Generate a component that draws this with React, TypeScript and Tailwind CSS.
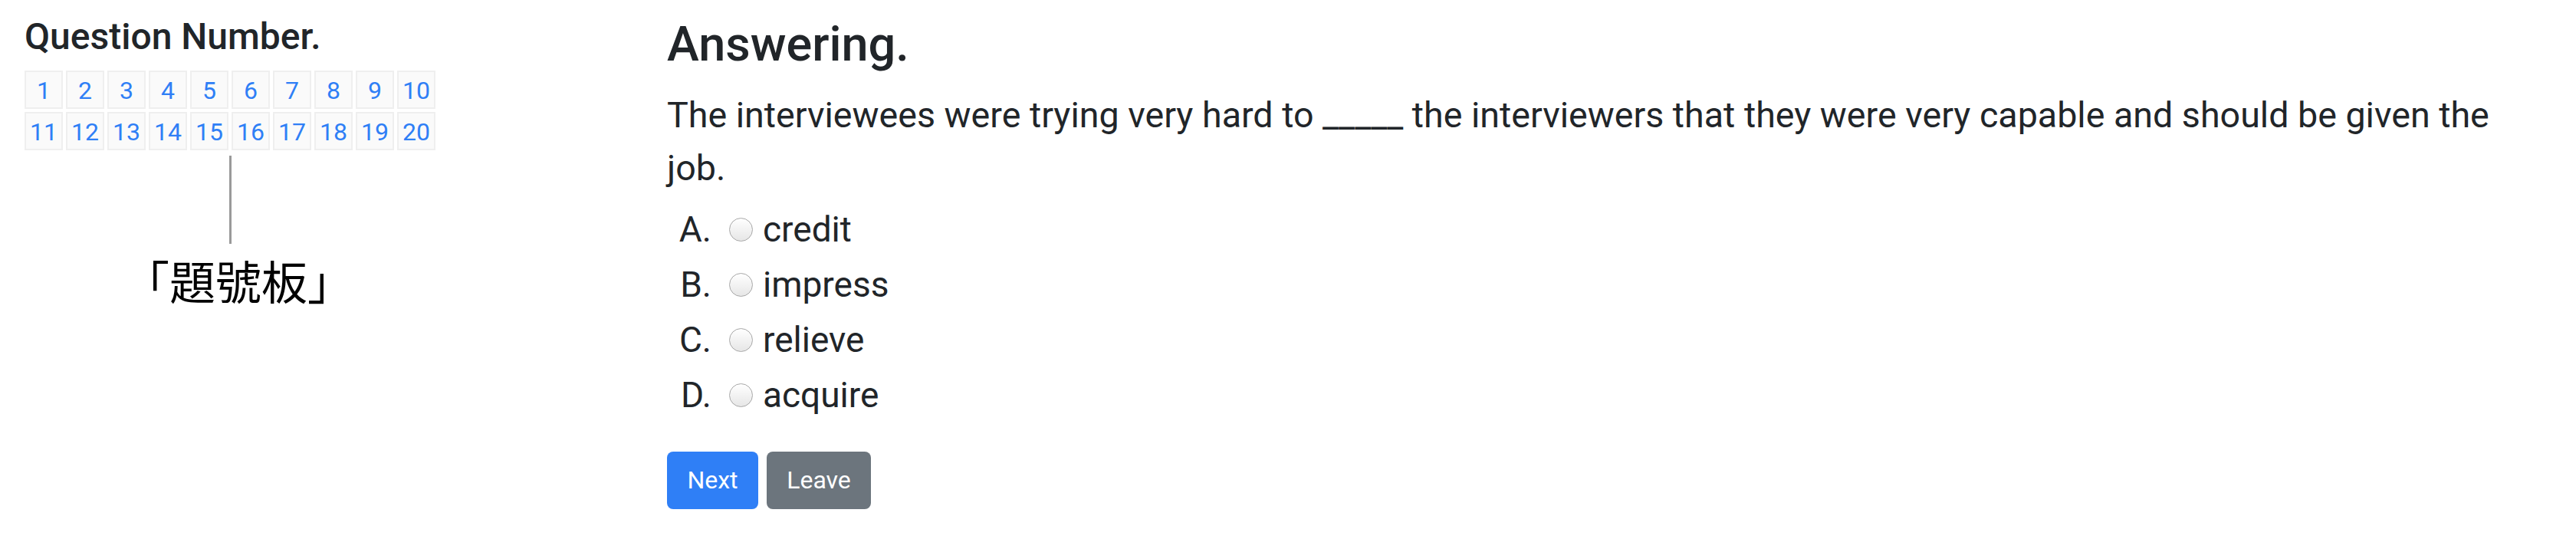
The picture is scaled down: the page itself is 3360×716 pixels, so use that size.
import { useState } from 'react'

const numbers = Array.from({ length: 20 }, (_, i) => i + 1)

const question = {
  text: 'The interviewees were trying very hard to _____ the interviewers that they were very capable and should be given the job.',
  options: [
    { label: 'A.', text: 'credit' },
    { label: 'B.', text: 'impress' },
    { label: 'C.', text: 'relieve' },
    { label: 'D.', text: 'acquire' },
  ],
}

export default function App() {
  const [answer, setAnswer] = useState<string | null>(null)

  return (
    <div className="flex min-h-[716px] bg-white font-['Roboto','Liberation_Sans',sans-serif] text-[#212529]">
      {/* question number board */}
      <div className="w-[870px] shrink-0 pl-[32px] pt-[19px]">
        <h5 className="text-[48px] font-medium leading-[1.2]">Question Number.</h5>
        <div className="mt-[15px] w-[536px]">
          <div className="grid grid-cols-10 gap-[4px]">
            {numbers.map((n) => (
              <a
                key={n}
                href="#"
                className="flex h-[50px] items-center justify-center border-2 border-[#efefef] bg-[#fafafa] pt-[3px] text-[32px] leading-none text-[#2f7ff6]"
              >
                {n}
              </a>
            ))}
          </div>
          <div className="mx-auto mt-[7px] h-[115px] w-[3px] bg-[#9a9a9a]"></div>
          <div className="mt-[17px] ml-[22px] text-center font-['Noto_Sans_CJK_TC',sans-serif] text-[60px] leading-none text-black">
            「題號板」
          </div>
        </div>
      </div>

      {/* answering */}
      <div className="w-[2400px] shrink-0 pt-[20px]">
        <h3 className="text-[63px] font-medium leading-[1.2]">Answering.</h3>
        <p className="mt-[20px] text-[46.6px] leading-[1.48]">{question.text}</p>
        <div className="mt-[10px]">
          {question.options.map((o) => (
            <label key={o.label} className="flex h-[72px] items-center text-[46px]">
              <span className="w-[58px] text-right">{o.label}</span>
              <input
                type="radio"
                name="answer"
                checked={answer === o.label}
                onChange={() => setAnswer(o.label)}
                className="ml-[23px] mr-[13px] h-[31px] w-[31px] appearance-none rounded-full border-[1.5px] border-[#a8a8a8] bg-gradient-to-b from-white to-[#e6e6e6]"
              />
              <span>{o.text}</span>
            </label>
          ))}
        </div>
        <div className="mt-[37px] flex gap-[11px]">
          <button className="h-[75px] w-[119px] rounded-[8px] bg-[#2f7ff6] text-[32px] text-white">Next</button>
          <button className="h-[75px] w-[136px] rounded-[8px] bg-[#6c757d] text-[32px] text-white">Leave</button>
        </div>
      </div>
    </div>
  )
}
